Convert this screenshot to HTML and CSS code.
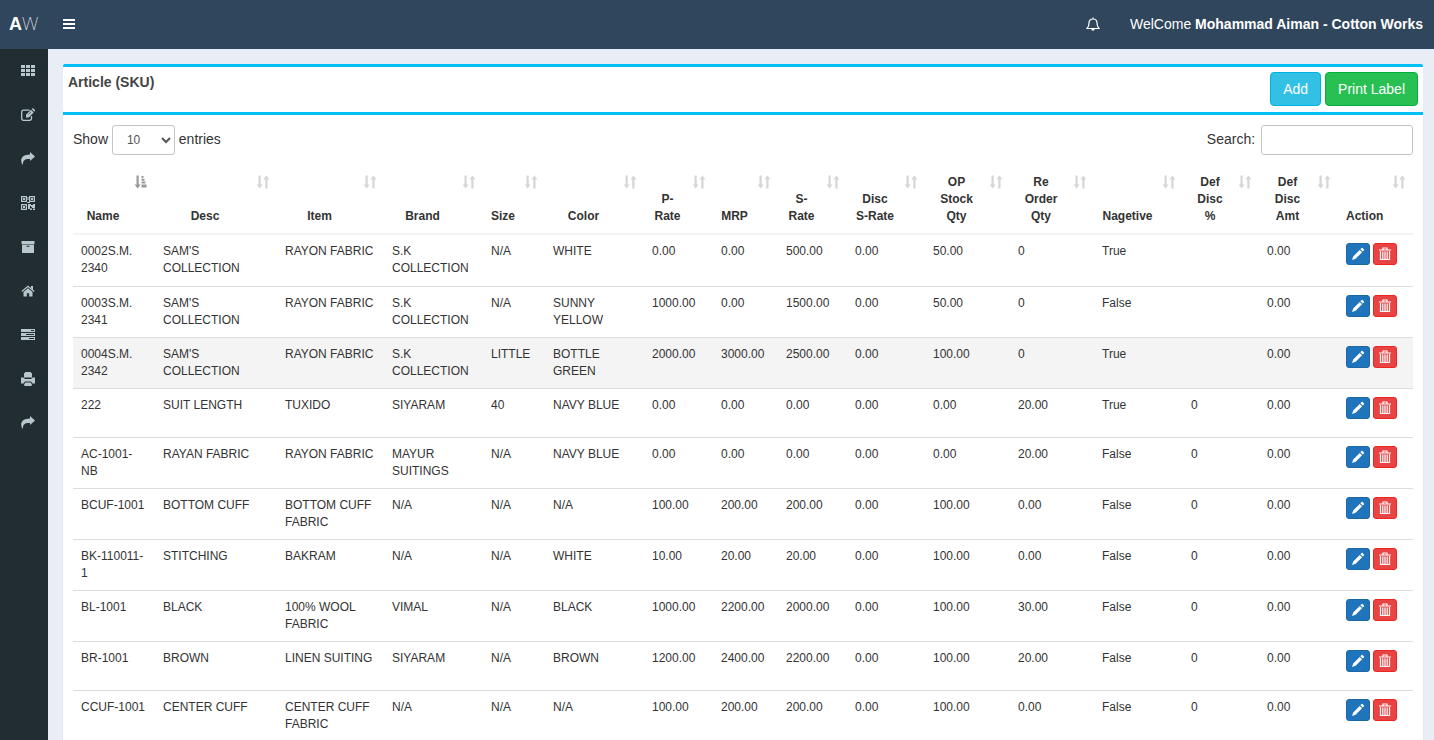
FILE: index.html
```html
<!DOCTYPE html>
<html lang="en">
<head>
  <meta charset="UTF-8" />
  <meta name="viewport" content="width=device-width, initial-scale=1.0"/>
  <title>Article (SKU)</title>
  <link rel="stylesheet" href="styles.css">
</head>
<body>
  <svg class="sprite" aria-hidden="true">
    <symbol id="i-grid" viewBox="0 0 14 14"><path d="M0 1h4v3H0zM5 1h4v3H5zM10 1h4v3h-4zM0 5h4v3H0zM5 5h4v3H5zM10 5h4v3h-4zM0 9h4v3H0zM5 9h4v3H5zM10 9h4v3h-4z"/></symbol>
    <symbol id="i-edit" viewBox="0 0 14 14"><path d="M10.500 8v2.500a1.800 1.800 0 0 1-1.800 1.800H2.500A1.800 1.800 0 0 1 .7 10.500V4A1.800 1.800 0 0 1 2.500 2.200H8.500" fill="none" stroke="currentColor" stroke-width="1.300"/><path d="M5 9.500V6.800l5-5L12.700 4.500l-5 5zM10.700 1.100l.6-.6a.9.9 0 0 1 1.200 0l1.400 1.400a.9.9 0 0 1 0 1.200l-.6.600z"/><path d="M7.500 6.500l2.700-2.700" stroke="#222d32" stroke-width=".6"/></symbol>
    <symbol id="i-share" viewBox="0 0 14 14"><path d="M9 0l5 4.500-5 4.500V7C4.500 6.800 2.200 7.800 1.900 12 1.900 12.700 1.300 12.700 1.100 12.200-1.200 7 .8 2.500 9 2.400z"/></symbol>
    <symbol id="i-qr" viewBox="0 0 14 14"><path fill-rule="evenodd" d="M0 0h6v6H0zM1.200 1.200v3.600h3.600V1.200zM8 0h6v6H8zM9.200 1.200v3.600h3.600V1.200zM0 8h6v6H0zM1.200 9.200v3.600h3.600V9.200z"/><path d="M2 2h2v2H2zM10 2h2v2h-2zM2 10h2v2H2zM7 8h3v1h2V8h2v4h-3v-1h-1v-1H9v3H7zM9 12.500h2V14H9zM12 12.500h2V14h-2zM6.500 1h1v3h-1zM6 6h3v1H6z"/></symbol>
    <symbol id="i-archive" viewBox="0 0 14 14"><path fill-rule="evenodd" d="M.500 1h13v3H.500zM1 4.500h12V13H1zM5.500 5.700v1h3v-1z"/></symbol>
    <symbol id="i-home" viewBox="0 0 14 14"><path d="M7 4.200 11.500 8v4.500H8.200V9.200H5.800v3.300H2.500V8z"/><path d="M.8 7.500 7 2.300l6.200 5.200" fill="none" stroke="currentColor" stroke-width="1.200"/><path d="M10 2h2v4l-2-1.700z"/></symbol>
    <symbol id="i-server" viewBox="0 0 14 14"><path fill-rule="evenodd" d="M0 1h14v3H0zM10 2v1h3V2zM0 5h14v3H0zM5 6v1h8V6zM0 9h14v3H0zM8 10v1h5v-1z"/></symbol>
    <symbol id="i-print" viewBox="0 0 14 14"><path d="M4.500 0h5L11 1.500V5.500H3V1.500zM0 5.500h2.500L4 7h6l1.500-1.500H14v6h-2.500L10 9.500H4L2.500 11.500H0zM4.500 10.500h5l1.500 2-.5 1.500h-7L3 12.500z"/></symbol>
    <symbol id="i-bars" viewBox="0 0 12 12"><path d="M0 1h12v2H0zM0 5h12v2H0zM0 9h12v2H0z"/></symbol>
    <symbol id="i-bell" viewBox="0 0 14 14"><path d="M1 11.500C2.500 10 3 8.500 3 6c0-2.500 1.500-4 4-4s4 1.500 4 4c0 2.500.5 4 2 5.500zM7 2V.5" fill="none" stroke="currentColor" stroke-width="1.200"/><path d="M5.300 12h3.400a1.700 1.700 0 0 1-3.400 0z"/></symbol>
    <symbol id="i-sort" viewBox="0 0 14 14"><path d="M2.500 0.500h2.200v9H6.600l-3 4L.6 9.500h1.900zM9.300 13.500v-9H7.400l3-4 3 4h-1.900v9z"/></symbol>
    <symbol id="i-sort-asc" viewBox="0 0 14 14"><path d="M2.500 0.500h2.200v9H6.600l-3 4L.6 9.500h1.900zM7.500 1h2v2h-2zM7.500 3.800h3v2h-3zM7.500 6.600h4v2h-4zM7.500 9.400h5v3.100h-5z"/></symbol>
    <symbol id="i-pencil" viewBox="0 0 14 14"><path d="M1 13l1.200-3.600L8.700 2.900l2.400 2.400-6.500 6.500zM9.400 2.200l1.100-1.100a.8.8 0 0 1 1.100 0l1.300 1.300a.8.8 0 0 1 0 1.100l-1.100 1.100z"/></symbol>
    <symbol id="i-trash" viewBox="0 0 14 14"><path d="M1 3h12M5 2.500V1h4v1.500M2.500 4v8.500h9V4M4.800 4.500v7.500M7 4.500v7.500M9.200 4.500v7.500" fill="none" stroke="currentColor" stroke-width="1.200"/></symbol>
  </svg>

  <header>
    <a href="#" class="logo"><b>A</b><span>W</span></a>
    <button type="button" class="toggle" aria-label="Toggle navigation"><svg><use href="#i-bars"/></svg></button>
    <a href="#" class="bell" aria-label="Notifications"><svg><use href="#i-bell"/></svg></a>
    <p class="welcome">WelCome <b>Mohammad Aiman - Cotton Works</b></p>
  </header>

  <div class="wrapper">
    <nav>
      <a href="#" aria-label="Dashboard"><svg><use href="#i-grid"/></svg></a>
      <a href="#" aria-label="Entry"><svg><use href="#i-edit"/></svg></a>
      <a href="#" aria-label="Issue"><svg><use href="#i-share"/></svg></a>
      <a href="#" aria-label="Barcode"><svg><use href="#i-qr"/></svg></a>
      <a href="#" aria-label="Stock"><svg><use href="#i-archive"/></svg></a>
      <a href="#" aria-label="Home"><svg><use href="#i-home"/></svg></a>
      <a href="#" aria-label="Master"><svg><use href="#i-server"/></svg></a>
      <a href="#" aria-label="Print"><svg><use href="#i-print"/></svg></a>
      <a href="#" aria-label="Reports"><svg><use href="#i-share"/></svg></a>
    </nav>

    <main>
      <section class="box title-box">
        <h1>Article (SKU)</h1>
        <div class="buttons">
          <button type="button" class="btn btn-info">Add</button>
          <button type="button" class="btn btn-success">Print Label</button>
        </div>
      </section>

      <section class="box table-box">
        <div class="controls">
          <label>Show
            <select>
              <option>10</option>
              <option>25</option>
              <option>50</option>
              <option>100</option>
            </select>
            entries</label>
          <label class="search">Search: <input type="search" /></label>
        </div>

        <table>
          <colgroup>
            <col class="w-name"><col class="w-desc"><col class="w-item"><col class="w-brand">
            <col class="w-size"><col class="w-color"><col class="w-prate"><col class="w-mrp">
            <col class="w-srate"><col class="w-disc"><col class="w-stock"><col class="w-order">
            <col class="w-neg"><col class="w-defp"><col class="w-defa"><col class="w-action">
          </colgroup>
          <thead><tr id="head"></tr></thead>
          <tbody id="rows"></tbody>
        </table>
      </section>
    </main>
  </div>

  <script>
    const heads = ["Name", "Desc", "Item", "Brand", "Size", "Color", "P-<br>Rate", "MRP", "S-<br>Rate", "Disc<br>S-Rate",
      "OP<br>Stock<br>Qty", "Re<br>Order<br>Qty", "Nagetive", "Def<br>Disc<br>%", "Def<br>Disc<br>Amt", "Action"];

    const articles = [
      ["0002S.M. 2340", "SAM'S COLLECTION", "RAYON FABRIC", "S.K COLLECTION", "N/A", "WHITE", "0.00", "0.00", "500.00", "0.00", "50.00", "0", "True", "", "0.00"],
      ["0003S.M. 2341", "SAM'S COLLECTION", "RAYON FABRIC", "S.K COLLECTION", "N/A", "SUNNY YELLOW", "1000.00", "0.00", "1500.00", "0.00", "50.00", "0", "False", "", "0.00"],
      ["0004S.M. 2342", "SAM'S COLLECTION", "RAYON FABRIC", "S.K COLLECTION", "LITTLE", "BOTTLE GREEN", "2000.00", "3000.00", "2500.00", "0.00", "100.00", "0", "True", "", "0.00"],
      ["222", "SUIT LENGTH", "TUXIDO", "SIYARAM", "40", "NAVY BLUE", "0.00", "0.00", "0.00", "0.00", "0.00", "20.00", "True", "0", "0.00"],
      ["AC-1001-NB", "RAYAN FABRIC", "RAYON FABRIC", "MAYUR SUITINGS", "N/A", "NAVY BLUE", "0.00", "0.00", "0.00", "0.00", "0.00", "20.00", "False", "0", "0.00"],
      ["BCUF-1001", "BOTTOM CUFF", "BOTTOM CUFF FABRIC", "N/A", "N/A", "N/A", "100.00", "200.00", "200.00", "0.00", "100.00", "0.00", "False", "0", "0.00"],
      ["BK-110011-1", "STITCHING", "BAKRAM", "N/A", "N/A", "WHITE", "10.00", "20.00", "20.00", "0.00", "100.00", "0.00", "False", "0", "0.00"],
      ["BL-1001", "BLACK", "100% WOOL FABRIC", "VIMAL", "N/A", "BLACK", "1000.00", "2200.00", "2000.00", "0.00", "100.00", "30.00", "False", "0", "0.00"],
      ["BR-1001", "BROWN", "LINEN SUITING", "SIYARAM", "N/A", "BROWN", "1200.00", "2400.00", "2200.00", "0.00", "100.00", "20.00", "False", "0", "0.00"],
      ["CCUF-1001", "CENTER CUFF", "CENTER CUFF FABRIC", "N/A", "N/A", "N/A", "100.00", "200.00", "200.00", "0.00", "100.00", "0.00", "False", "0", "0.00"]
    ];

    document.getElementById("head").innerHTML = heads.map((h, i) => `
      <th scope="col">${h}<svg class="sort"><use href="#${i ? "i-sort" : "i-sort-asc"}"/></svg></th>
    `).join("");

    document.getElementById("rows").innerHTML = articles.map((a, i) => `
      <tr class="${i === 2 ? "active" : ""}">
        ${a.map(v => `<td>${v}</td>`).join("")}
        <td><div class="actions">
          <button type="button" class="edit" aria-label="Edit"><svg><use href="#i-pencil"/></svg></button>
          <button type="button" class="delete" aria-label="Delete"><svg><use href="#i-trash"/></svg></button>
        </div></td>
      </tr>
    `).join("");
  </script>
</body>
</html>
```
FILE: styles.css
```css
:root {
  --header: #30465c;
  --side: #222d32;
  --bg: #e9eef6;
  --text: #333;
  --accent: #00bff8;
  --info: #32c0e4;
  --success: #28c053;
  --primary: #2074bc;
  --danger: #e94444;
}

* {
  margin: 0;
  padding: 0;
  box-sizing: border-box;
}

body {
  background: var(--bg);
  color: var(--text);
  font-family: "Liberation Sans", Arial, sans-serif;
  font-size: 14px;
  line-height: 20px;
  min-height: 100vh;
  display: flex;
  flex-direction: column;
}

.sprite {
  display: none;
}

svg {
  display: block;
  width: 14px;
  height: 14px;
  fill: currentColor;
}

button, select, input {
  font-family: inherit;
  font-size: 14px;
}

button {
  cursor: pointer;
}

header {
  background: var(--header);
  color: #fff;
  height: 49px;
  display: flex;
  align-items: center;
  padding: 0 11px 2px 0;
}

.logo {
  width: 48px;
  padding-left: 9px;
  color: #fff;
  font-size: 18px;
  text-decoration: none;
}

.logo span {
  font-family: Roboto, sans-serif;
  font-weight: 100;
}

.toggle {
  background: none;
  border: none;
  color: #fff;
  padding: 0 15px;
}

.toggle svg {
  width: 12px;
  height: 12px;
}

.bell {
  color: #fff;
  margin-left: auto;
  margin-right: 30px;
}

.wrapper {
  flex: 1;
  display: flex;
}

nav {
  width: 48px;
  background: var(--side);
}

nav a {
  display: flex;
  align-items: center;
  height: 44px;
  padding-left: 21px;
  color: #b8c7ce;
}

main {
  flex: 1;
  min-width: 0;
  padding: 15px 11px 15px 15px;
}

.box {
  background: #fff;
  border-top: 3px solid var(--accent);
  border-radius: 2px;
  box-shadow: 0 1px 1px rgba(0, 0, 0, 0.1);
}

.title-box {
  display: flex;
  justify-content: space-between;
  align-items: flex-start;
  padding: 5px 5px 6px;
  box-shadow: none;
}

h1 {
  color: #444;
  font-size: 14px;
}

.buttons {
  display: flex;
  gap: 4px;
}

.btn {
  height: 34px;
  padding: 0 12px;
  color: #fff;
  border: 1px solid;
  border-radius: 4px;
}

.btn-info {
  background: var(--info);
  border-color: #00b2e2;
}

.btn-success {
  background: var(--success);
  border-color: #00ae3c;
}

.table-box {
  padding: 10px;
  border-radius: 0;
}

.controls {
  display: flex;
  justify-content: space-between;
  margin-bottom: 11px;
}

.controls select, .controls input {
  height: 30px;
  background: #fff;
  border: 1px solid #c4c4c4;
  border-radius: 3px;
  color: #555;
}

.controls select {
  width: 63px;
  padding-left: 10px;
  font-size: 12px;
}

.controls input {
  width: 152px;
  padding: 0 10px;
  margin-left: 2px;
  font-size: 12px;
}

table {
  width: 100%;
  table-layout: fixed;
  border-spacing: 0;
  font-size: 12px;
  line-height: 17px;
}

/* column widths, shared out over the full table */
.w-name { width: 82px; }
.w-desc { width: 122px; }
.w-item { width: 107px; }
.w-brand, .w-color { width: 99px; }
.w-size { width: 62px; }
.w-prate, .w-srate { width: 69px; }
.w-mrp { width: 65px; }
.w-disc { width: 78px; }
.w-stock { width: 85px; }
.w-order { width: 84px; }
.w-neg { width: 89px; }
.w-defp { width: 76px; }
.w-defa { width: 79px; }
.w-action { width: 75px; }

th {
  position: relative;
  padding: 8px 30px 8px 8px;
  vertical-align: bottom;
  text-align: center;
  border-bottom: 2px solid #f4f4f4;
}

.sort {
  position: absolute;
  top: 9px;
  right: 7px;
  color: #d6d6d6;
}

th:first-child .sort {
  color: #999;
}

td {
  height: 49px;
  padding: 8px;
  vertical-align: top;
  border-top: 1px solid #ddd;
}

tbody tr:first-child td {
  height: 51px;
  border-top: none;
}

tbody tr:hover, .active {
  background: #f4f4f4;
}

.actions {
  display: flex;
  gap: 3px;
}

.actions button {
  width: 24px;
  height: 22px;
  display: flex;
  align-items: center;
  justify-content: center;
  flex: none;
  color: #fff;
  border: 1px solid;
  border-radius: 3px;
}

.actions .edit {
  background: var(--primary);
  border-color: #1c67a8;
}

.actions .delete {
  background: var(--danger);
  border-color: #ee2424;
}
```
